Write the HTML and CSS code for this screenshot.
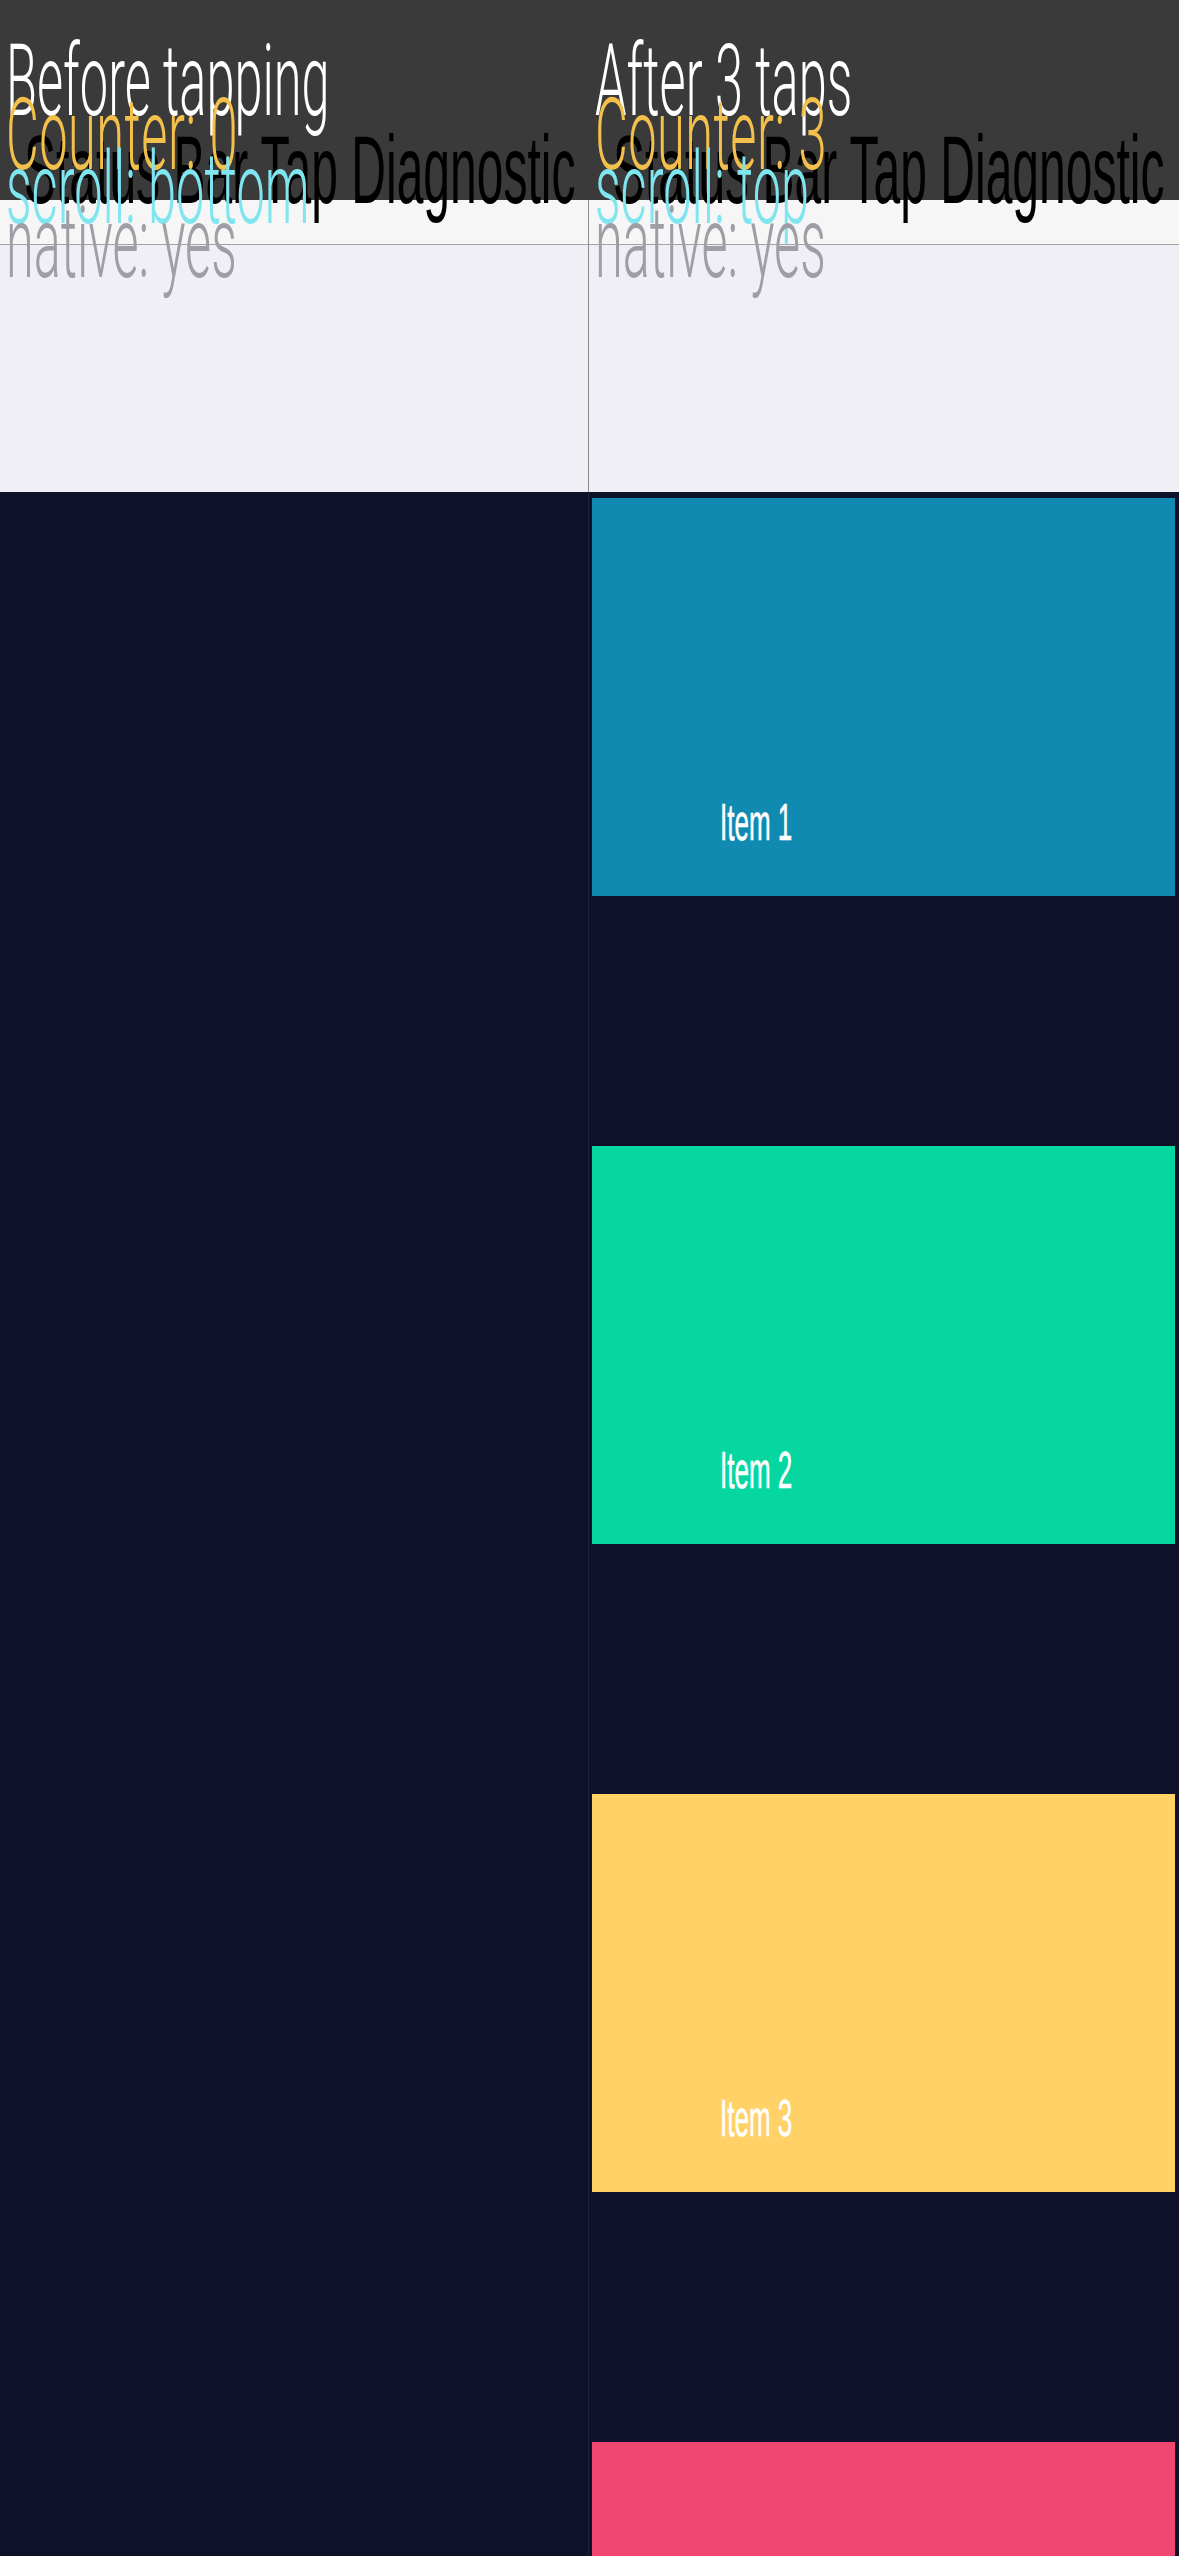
FILE: index.html
```html
<!DOCTYPE html>
<html lang="en">
<head>
<meta charset="utf-8">
<title>Status Bar Tap Diagnostic</title>
<link rel="stylesheet" href="styles.css">
</head>
<body>
<div class="viewport">
  <div class="stage">
    <section class="panel">
      <div class="status-area"></div>
      <div class="nav-bar"></div>
      <div class="sub-header"></div>
      <div class="list"></div>
      <h1 class="nav-title">Status Bar Tap Diagnostic</h1>
      <div class="caption">
        <p class="caption-head">Before tapping</p>
        <p class="caption-counter">Counter: 0</p>
        <p class="caption-scroll">scroll: bottom</p>
        <p class="caption-native">native: yes</p>
      </div>
    </section>

    <div class="divider"></div>

    <section class="panel">
      <div class="status-area"></div>
      <div class="nav-bar"></div>
      <div class="sub-header"></div>
      <div class="list list-filled">
        <div class="row row-blue"><span class="row-label">Item 1</span></div>
        <div class="row row-green"><span class="row-label">Item 2</span></div>
        <div class="row row-yellow"><span class="row-label">Item 3</span></div>
        <div class="row row-pink"><span class="row-label">Item 4</span></div>
      </div>
      <h1 class="nav-title">Status Bar Tap Diagnostic</h1>
      <div class="caption">
        <p class="caption-head">After 3 taps</p>
        <p class="caption-counter">Counter: 3</p>
        <p class="caption-scroll">scroll: top</p>
        <p class="caption-native">native: yes</p>
      </div>
    </section>
  </div>
</div>
</body>
</html>
```

FILE: styles.css
```css
html, body {
  margin: 0;
  padding: 0;
  overflow: hidden;
  background: #0e1129;
}

/* visible window; the two phone captures sit side by side, squeezed to half width */
.viewport {
  width: 1179px;
  height: 2556px;
  overflow: hidden;
}

.stage {
  width: 2358px;
  height: 2556px;
  display: grid;
  grid-template-columns: 1176px 2px 1180px;
  transform: scaleX(0.5);
  transform-origin: 0 0;
}

.divider {
  background: linear-gradient(to bottom,
    #3a3a3a 0 200px,
    #8c8c8c 200px 492px,
    #1e2137 492px 100%);
}

.panel {
  position: relative;
  height: 2556px;
  display: flex;
  flex-direction: column;
  overflow: hidden;
}

.status-area {
  height: 200px;
  flex: none;
  background: #3a3a3a;
}

.nav-bar {
  height: 44px;
  flex: none;
  background: #f6f6f6;
  border-bottom: 1px solid #a3a3a3;
}

.sub-header {
  height: 247px;
  flex: none;
  background: #efeff5;
}

.list {
  flex: 1;
  background: #0e1129;
}

.list-filled {
  display: flex;
  flex-direction: column;
  gap: 250px;
  padding: 6px 8px 0 6px;
}

.row {
  flex: none;
  height: 398px;
  display: flex;
  align-items: flex-end;
  padding: 0 0 48px 256px;
  box-sizing: border-box;
}

.row-blue { background: #118ab2; }
.row-green { background: #06d6a0; }
.row-yellow { background: #ffd166; }
.row-pink { background: #ef476f; }

.row-label {
  font-family: "Liberation Sans", Arial, sans-serif;
  font-weight: 400;
  font-size: 52px;
  line-height: 52px;
  color: #ffffff;
  -webkit-text-stroke: 0.6px #ffffff;
}

/* large navigation title, drawn across the status area edge */
.nav-title {
  position: absolute;
  top: 122px;
  left: 48px;
  margin: 0;
  font-family: "Liberation Sans", Arial, sans-serif;
  font-weight: 400;
  font-size: 96px;
  line-height: 96px;
  color: #000000;
  white-space: nowrap;
}

/* state caption laid over the capture */
.caption {
  position: absolute;
  top: 54px;
  left: 12px;
  font-family: Roboto, "Liberation Sans", sans-serif;
  font-weight: 300;
  font-size: 101px;
  line-height: 54px;
  white-space: nowrap;
}

.caption p {
  margin: 0;
}

.caption-head { color: #ffffff; }
.caption-counter { color: #f3c04b; letter-spacing: 1px; }
.caption-scroll { color: #7fe6f0; }
.caption-native { color: #9e9ea6; }
```
